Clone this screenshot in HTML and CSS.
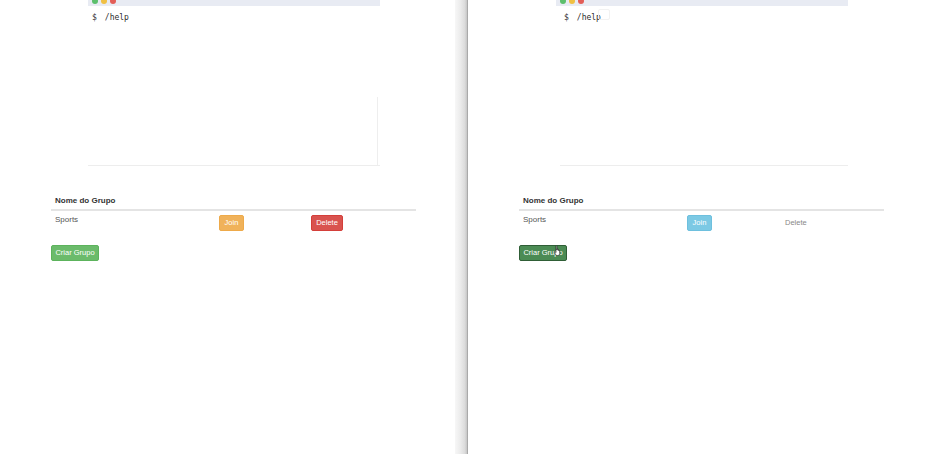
FILE: index.html
```html
<!DOCTYPE html>
<html>
<head>
<meta charset="utf-8">
<link rel="stylesheet" href="styles.css">
</head>
<body>
<div class="screen">
  <section class="panel left">
    <div class="terminal">
      <div class="titlebar">
        <span class="dot green"></span><span class="dot yellow"></span><span class="dot red"></span>
      </div>
      <div class="term-body">
        <div class="prompt"><span class="dollar">$</span><span>/help</span></div>
        <div class="spacer"></div>
        <div class="scroll"></div>
      </div>
    </div>
    <div class="groups">
      <div class="thead">
        <div class="th">Nome do Grupo</div>
      </div>
      <div class="row">
        <div class="cell name">Sports</div>
        <div class="cell"><button class="btn warning">Join</button></div>
        <div class="cell"><button class="btn danger">Delete</button></div>
      </div>
      <button class="btn success">Criar Grupo</button>
    </div>
  </section>
  <div class="divider"></div>
  <section class="panel right">
    <div class="terminal">
      <div class="titlebar">
        <span class="dot green"></span><span class="dot yellow"></span><span class="dot red"></span>
      </div>
      <div class="term-body plain">
        <div class="prompt"><span class="dollar">$</span><span>/help</span><span class="caretbox"></span></div>
        <div class="spacer"></div>
      </div>
    </div>
    <div class="groups">
      <div class="thead">
        <div class="th">Nome do Grupo</div>
      </div>
      <div class="row">
        <div class="cell name">Sports</div>
        <div class="cell"><button class="btn info">Join</button></div>
        <div class="cell"><span class="link">Delete</span></div>
      </div>
      <div class="create-wrap">
        <button class="btn success active">Criar Grupo</button>
        <svg class="cursor" width="9" height="11" viewBox="0 0 9 11">
          <path d="M3 1.2c0-.6.9-.6.9 0V5l.1-1c0-.6.9-.6.9 0v1.2c0-.6.9-.6.9 0v.8c0-.6.9-.6.9 0v2.5c0 1.2-.9 2-2 2H4.2c-.7 0-1.100-.3-1.500-.9L1.3 7.3c-.3-.5.3-1 .7-.6L3 7.6z" fill="#fff" stroke="#222" stroke-width="0.7"/>
        </svg>
      </div>
    </div>
  </section>
</div>
</body>
</html>
```
FILE: styles.css
```css
* { box-sizing: border-box; }
html, body { margin: 0; padding: 0; background: #fff; }
body { font-family: "Liberation Sans", Arial, sans-serif; color: #333; }
.screen { display: flex; width: 936px; height: 454px; overflow: hidden; }
.panel { display: flex; flex-direction: column; height: 454px; }
.left { width: 455px; }
.right { width: 468px; }
.divider {
  width: 13px;
  height: 454px;
  background: linear-gradient(to right, #f7f7f7 0%, #ececec 40%, #dcdcdc 75%, #c6c6c6 92%, #8f8f8f 100%);
}
.terminal { margin-left: 88px; width: 292px; height: 166px; display: flex; flex-direction: column; }
.titlebar {
  height: 6px;
  background: #e8ebf3;
  display: flex;
  gap: 3px;
  padding-left: 4px;
  overflow: hidden;
}
.dot { width: 6px; height: 6px; border-radius: 50%; margin-top: -2px; }
.green { background: #5cbf6c; }
.yellow { background: #f0c043; }
.red { background: #e35e57; }
.term-body {
  flex: 1;
  display: flex;
  flex-direction: column;
  border-bottom: 1px solid #ededed;
}
.prompt {
  font-family: "DejaVu Sans Mono", monospace;
  font-size: 8px;
  color: #2d2d2d;
  padding: 4px 0 0 4px;
  display: flex;
  gap: 8px;
  align-items: center;
  height: 18px;
}
.spacer { flex: 1; }
.scroll { height: 68px; border-right: 1px solid #eeeeee; margin-right: 2px; }
.plain { margin-left: 4px; }
.caretbox { width: 12px; height: 11px; border: 1px solid #f2f2f2; border-radius: 2px; margin-left: -11px; margin-top: -5px; }
.groups { margin-left: 51px; margin-top: 30px; width: 365px; }
.thead { border-bottom: 2px solid #e4e4e4; height: 15px; }
.th { font-size: 8px; font-weight: bold; padding: 0 0 0 4px; line-height: 10px; color: #333; }
.row { display: grid; grid-template-columns: 164px 92px 1fr; height: 30px; padding-top: 3px; }
.cell { padding-left: 4px; font-size: 8px; font-weight: 400; line-height: 12px; color: #555; }
.btn {
  font-family: "Liberation Sans", Arial, sans-serif;
  font-size: 7.5px;
  color: #fff;
  border: 1px solid transparent;
  border-radius: 2px;
  height: 16px;
  padding: 0 6px;
  margin-top: 1px;
  line-height: 14px;
}
.warning { background: #f0b25a; border-color: #eeaa4a; width: 25px; padding: 0; }
.danger { background: #d9534f; border-color: #d43f3a; width: 32px; padding: 0; }
.info { background: #7cc9e4; border-color: #6ec0de; width: 25px; padding: 0; }
.link { display: inline-block; margin-top: 3px; padding-left: 6px; color: #888; font-size: 7.5px; }
.success { background: #6bbb6b; border-color: #5cb35c; width: 48px; padding: 0; margin: 0; height: 16px; }
.active { background: #4b8b54; border-color: #2f5e36; }
.create-wrap { position: relative; width: 60px; }
.cursor { position: absolute; left: 34px; top: 4px; }
```
